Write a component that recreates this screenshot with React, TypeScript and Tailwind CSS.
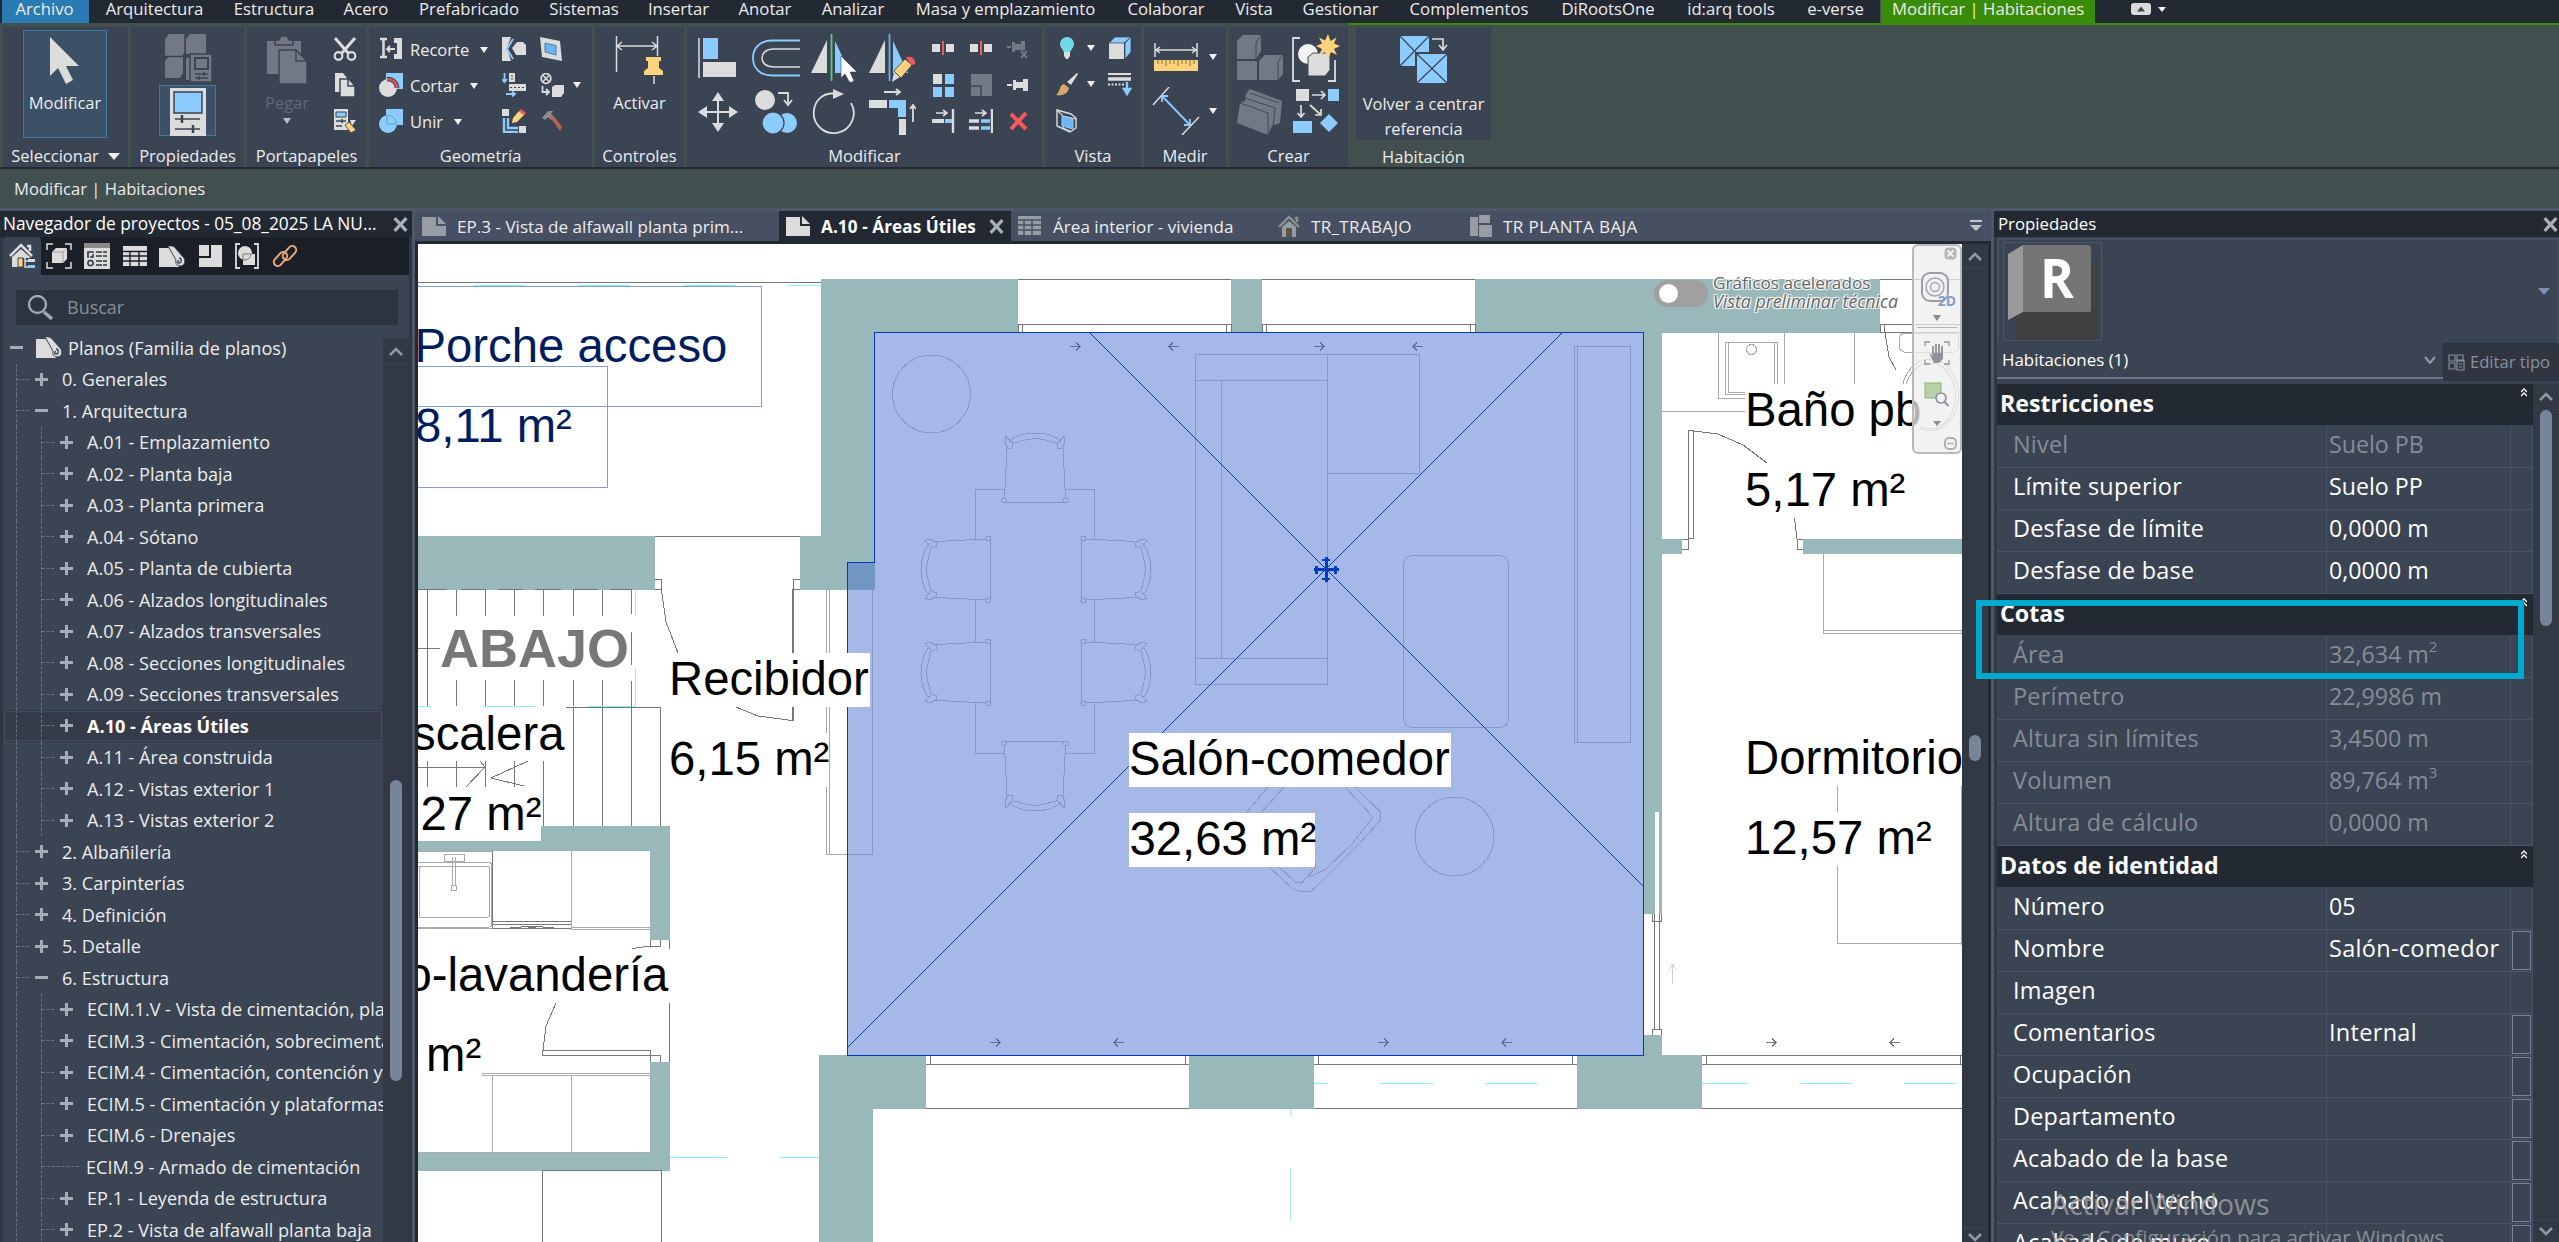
import React from 'react';

type Kids = { children?: React.ReactNode };

const L = '#dcdcdc';
const B = '#8ccbfd';
const G = '#727985';
const Y = '#fdd27c';
const D = '#3b4453';

/* ---------- shared bits ---------- */

function Ic({ s = 24, h, children }: Kids & { s?: number; h?: number }) {
  return (
    <svg width={s} height={h ?? s} viewBox={`0 0 ${s} ${h ?? s}`} fill="none" className="block shrink-0">
      {children}
    </svg>
  );
}

function Tri({ big }: { big?: boolean }) {
  return big ? (
    <Ic s={12} h={7}><path d="M0 0h12L6 7z" fill="#f0f0f0" /></Ic>
  ) : (
    <Ic s={8} h={6}><path d="M0 0h8L4 6z" fill="#f0f0f0" /></Ic>
  );
}

function Cross({ s = 14 }: { s?: number }) {
  return (
    <svg width={s} height={s} viewBox="0 0 14 14" className="block shrink-0">
      <path d="M1.5 1l11 12M12.5 1l-11 12" stroke="#a9afb9" strokeWidth="3" />
    </svg>
  );
}

function Chevron({ down }: { down?: boolean }) {
  return (
    <svg width="14" height="9" viewBox="0 0 14 9" fill="none" className="block shrink-0">
      <path d={down ? 'M1 1l6 6 6-6' : 'M1 8l6-6 6 6'} stroke="#8f98a5" strokeWidth="2.6" />
    </svg>
  );
}

/* ---------- menu bar ---------- */

const MENU: [string, string][] = [
  ['Arquitectura', 'w-[131px]'],
  ['Estructura', 'w-[108px]'],
  ['Acero', 'w-[76px]'],
  ['Prefabricado', 'w-[130px]'],
  ['Sistemas', 'w-[100px]'],
  ['Insertar', 'w-[89px]'],
  ['Anotar', 'w-[84px]'],
  ['Analizar', 'w-[92px]'],
  ['Masa y emplazamiento', 'w-[213px]'],
  ['Colaborar', 'w-[108px]'],
  ['Vista', 'w-[68px]'],
  ['Gestionar', 'w-[105px]'],
  ['Complementos', 'w-[152px]'],
  ['DiRootsOne', 'w-[126px]'],
  ['id:arq tools', 'w-[120px]'],
  ['e-verse', 'w-[89px]'],
];

function MenuBar() {
  return (
    <div className="flex h-[23px] shrink-0 bg-[#222933] text-[16.7px] leading-[18px] whitespace-nowrap text-[#ececec]">
      <div className="ml-[2px] w-[87px] bg-[#2a7ab3] pr-[2px] text-center">Archivo</div>
      {MENU.map(([t, w]) => (
        <div key={t} className={`${w} text-center`}>{t}</div>
      ))}
      <div className="w-[215px] border-l border-[#4b5560] bg-[#398c07] text-center">Modificar | Habitaciones</div>
      <div className="flex h-[18px] items-center gap-[7px] pl-[36px]">
        <Ic s={20} h={12}>
          <rect width="20" height="12" rx="3" fill="#dcdcdc" />
          <path d="M6 8.500h8L10 3.500z" fill="#3b4453" />
        </Ic>
        <Ic s={8} h={5}><path d="M0 0h8L4 5z" fill="#f0f0f0" /></Ic>
      </div>
    </div>
  );
}

/* ---------- ribbon ---------- */

function Panel({ w, label, arrow, children }: Kids & { w: string; label: string; arrow?: boolean }) {
  return (
    <div className={`${w} flex shrink-0 flex-col bg-[#3b4453]`}>
      <div className="flex h-[115px] items-start">{children}</div>
      <div className="flex h-[25px] items-center justify-center gap-[9px] pt-[3px]">
        {label}
        {arrow && <Tri big />}
      </div>
    </div>
  );
}

function Slot({ c, children }: Kids & { c: string }) {
  return <div className={`${c} flex shrink-0 items-center justify-center`}>{children}</div>;
}

function Cubes() {
  return (
    <g fill={G}>
      <path d="M2 5l4-5h16v18l-4 5H2zM23 5l4-5h16v20H23zM2 27l4-5h14v17l-3 5H2z" />
      <path d="M23 24h6v22h-6z" />
      <path d="M22 0v44M0 22.500h44" stroke={D} strokeWidth="1.500" />
    </g>
  );
}

const ICON = {
  cursor: (
    <Ic s={32} h={48}><path d="M1 0v39l8-8 8 16 7-4-7-14h13z" fill={L} /></Ic>
  ),
  typeProps: (
    <Ic s={50} h={48}>
      <Cubes />
      <path d="M27 20h22v28H27z" fill={G} stroke={D} strokeWidth="1.500" />
      <path d="M32 24h13v11H32z" fill={G} stroke={D} strokeWidth="2" />
      <path d="M32 40h13M32 44h13M41 38v4M36 42v4" stroke={D} strokeWidth="1.500" />
    </Ic>
  ),
  props: (
    <Ic s={36} h={48}>
      <path d="M0 0h36v48H0z" fill={L} />
      <path d="M4 4h28v21H4z" fill={B} stroke="#3b4453" strokeWidth="1.500" />
      <path d="M5 31h25M5 41h25" stroke="#3b4453" strokeWidth="1.500" />
      <path d="M12 27v8M23 37v8" stroke="#3b4453" strokeWidth="2.500" />
    </Ic>
  ),
  paste: (
    <Ic s={40} h={48}>
      <path d="M0 5h34v33H0z" fill={G} />
      <path d="M8 4h4l2-4h6l2 4h4v5H8z" fill={G} stroke={D} strokeWidth="1.500" />
      <path d="M12 14h17l11 11v23H12z" fill={G} stroke={D} strokeWidth="1.500" />
      <path d="M29 14v11h11" stroke={D} strokeWidth="1.500" />
    </Ic>
  ),
  cut: (
    <Ic>
      <path d="M2 1l14 16M22 1L8 17" stroke={L} strokeWidth="3" />
      <circle cx="5.500" cy="19" r="3.800" stroke={L} strokeWidth="2.200" />
      <circle cx="18.500" cy="19" r="3.800" stroke={L} strokeWidth="2.200" />
    </Ic>
  ),
  copyClip: (
    <Ic>
      <path d="M2 0h8l4 5v14H2z" fill={L} />
      <path d="M7 6h9l6 7v11H7z" fill={L} stroke={D} strokeWidth="1.500" />
      <path d="M15 6v7h7" stroke={D} strokeWidth="1.500" />
    </Ic>
  ),
  match: (
    <Ic>
      <path d="M1 0h14v21H1z" fill={L} />
      <path d="M3 3h10v5H3z" fill={B} stroke={D} />
      <path d="M3 12h10M3 17h6M9 10v4" stroke={D} strokeWidth="1.500" />
      <path d="M13 14l4 4-2 2zM17 11l6 0-4 6z" fill={L} />
      <path d="M12 16l4-3 7 8-5 3z" fill={Y} stroke={D} strokeWidth="0.800" />
    </Ic>
  ),
  cope: (
    <Ic>
      <path d="M1 2h7M4.500 2v18M1 20h7" stroke={L} strokeWidth="2.500" />
      <path d="M15 1h8v21h-8v-5h3V6h-3z" fill={L} />
      <path d="M8 12h8M11 9l-3 3 3 3" stroke={L} strokeWidth="1.800" />
    </Ic>
  ),
  cutGeo: (
    <Ic>
      <path d="M7 0h17v16H7z" fill={B} />
      <circle cx="9" cy="15" r="9" fill={L} />
      <path d="M8 6c6 0 10 4 10 9" stroke={D} strokeWidth="4.500" />
      <path d="M8 6c6 0 10 4 10 9" stroke="#e05555" strokeWidth="2.500" />
    </Ic>
  ),
  joinGeo: (
    <Ic>
      <path d="M7 0h17v16H7z" fill={B} />
      <circle cx="9" cy="15" r="9" fill={B} />
      <path d="M8 6v9h9.500A9.500 9.500 0 008 6z" stroke="#5fa0d8" />
    </Ic>
  ),
  joinWall: (
    <Ic>
      <path d="M0 0h9l-4 11 4 13H0z" fill={L} />
      <path d="M15 5h6l3 3v10H14l-4-7z" fill={L} />
      <path d="M11 2L5 12l6 10" stroke={B} strokeWidth="2" />
    </Ic>
  ),
  face: (
    <Ic>
      <path d="M0 0l20 4 2 20-20-4z" fill={L} />
      <path d="M5 6l11 2.500V18L5 15z" fill="#6db4f2" stroke="#4a7ba5" />
    </Ic>
  ),
  wallOpen: (
    <Ic>
      <path d="M2.500 0v9M0 6l2.500 3L5 6M4 21h9M10 18.500l3 2.500-3 2.500" stroke={B} strokeWidth="1.800" />
      <path d="M7 0h6v9H7z" fill={L} />
      <path d="M9 3h2M9 6h2" stroke={D} />
      <path d="M7 11h17v7H7z" fill={L} />
      <path d="M8 14.500h15" stroke={D} strokeDasharray="2 2" />
    </Ic>
  ),
  demolish2: (
    <Ic>
      <circle cx="6" cy="5.500" r="4.800" stroke={L} strokeWidth="1.800" />
      <path d="M3 2.500l6 6M9 2.500l-6 6" stroke={L} strokeWidth="1.500" />
      <path d="M2.500 13v6h6M6 16l3 3-3 3" stroke={L} strokeWidth="1.800" />
      <path d="M12 14l3-2h9v8l-3 4h-9z" fill={L} />
    </Ic>
  ),
  beamJoin: (
    <Ic>
      <path d="M0 0h7v7H0zM17 17h7v7h-7z" fill={L} />
      <path d="M2 9v14h14M6 9v10h10" stroke={B} strokeWidth="2.400" />
      <path d="M10 14l1-5 6-7 5 4-7 7z" fill={Y} />
      <path d="M17 2l2-2 5 4-2 2.500z" fill="#f25a5a" />
    </Ic>
  ),
  hammer: (
    <Ic>
      <path d="M2 9L8 2l5 0-2 3 3 3-3 3-3-3-3 3z" fill="#8e8e8e" />
      <path d="M10 8l3-2 9 12-2 4z" fill="#b5654f" />
    </Ic>
  ),
  activate: (
    <Ic s={50} h={48}>
      <path d="M1.500 0v36M42.500 0v20M2 10h40M7 6l-5 4 5 4M37 6l5 4-5 4" stroke={L} strokeWidth="1.500" />
      <path d="M31 21h15v4h-2v7l4 3v4H29v-4l4-3v-7h-2z" fill={Y} />
      <path d="M39 40v8" stroke={L} strokeWidth="1.500" />
    </Ic>
  ),
  align: (
    <Ic s={40}>
      <path d="M1 0v40" stroke={L} strokeWidth="1.500" />
      <path d="M5 0h15v21H5z" fill={B} />
      <path d="M5 24h33v15H5z" fill={L} />
    </Ic>
  ),
  offset: (
    <Ic s={48} h={40}>
      <path d="M48 2.500H20C8 2.500 1 10 1 20s7 17.500 19 17.500h28" stroke={B} strokeWidth="1.800" />
      <path d="M48 11H22c-8 0-12 4-12 9s4 9 12 9h26" stroke={L} strokeWidth="1.500" />
    </Ic>
  ),
  mirrorPick: (
    <Ic s={48}>
      <path d="M1 39L17 6v33z" fill={L} />
      <path d="M25 7l15 32H25z" fill={B} />
      <path d="M21.500 0v47" stroke="#4fd07a" strokeWidth="1.800" />
      <path d="M31 22v22l4-4 5 9 4-2-4-9h7z" fill="#fff" stroke={D} strokeWidth="0.600" />
    </Ic>
  ),
  mirrorDraw: (
    <Ic s={48}>
      <path d="M1 39L17 6v33z" fill={L} />
      <path d="M25 7l15 32H25z" fill={B} />
      <path d="M21.500 0v47" stroke="#5fb0f0" strokeWidth="1.800" />
      <path d="M24 48l2-10 6 5z" fill={L} />
      <path d="M26 37l11-12 7 6-11 13z" fill={Y} stroke={D} strokeWidth="0.800" />
      <path d="M38 24c2-3 10-1 9 6l-3 1z" fill="#f25a5a" />
    </Ic>
  ),
  move: (
    <Ic s={40}>
      <path d="M20 6v28M6 20h28" stroke={L} strokeWidth="2" />
      <path d="M20 0l6 9H14zM20 40l6-9H14zM0 20l9-6v12zM40 20l-9-6v12z" fill={L} />
    </Ic>
  ),
  copy: (
    <Ic s={46}>
      <circle cx="12" cy="11" r="10" fill={L} />
      <path d="M25 4h10v10M31 11l4 5 4-5" stroke={L} strokeWidth="1.800" />
      <circle cx="34" cy="34" r="10" fill={B} />
      <circle cx="20" cy="34" r="11" fill={B} stroke={D} strokeWidth="1.200" />
    </Ic>
  ),
  rotate: (
    <Ic s={46}>
      <path d="M40 14A20 20 0 113 21C4 12 11 5 20 4.500h6" stroke={L} strokeWidth="1.800" />
      <path d="M22 0l11 5-11 5z" fill={L} />
    </Ic>
  ),
  trim: (
    <Ic s={48}>
      <path d="M1 12h18v8H1z" fill={L} />
      <path d="M21 12h17v17h-8v-9h-9z" fill={B} />
      <path d="M31 31h7v16h-7z" fill={L} />
      <path d="M16 4h16M28 1l4 3-4 3M45 34V17M42 21l3-4 3 4" stroke={L} strokeWidth="1.800" />
    </Ic>
  ),
  split: (
    <Ic>
      <path d="M1 8h8v8H1zM15 8h8v8h-8z" fill={L} />
      <path d="M12 5v14" stroke="#f25a5a" strokeWidth="2" />
    </Ic>
  ),
  unpin: (
    <Ic>
      <path d="M0 11h4" stroke={G} strokeWidth="2" />
      <path d="M5 6h3v2h6V5h4v12h-4v-3H8v2H5z" fill={G} />
      <path d="M14 15l6 7M20 15l-6 7" stroke={D} strokeWidth="4.500" />
      <path d="M14 15l6 7M20 15l-6 7" stroke={G} strokeWidth="2" />
    </Ic>
  ),
  array: (
    <Ic>
      <path d="M2 1h9v10H2z" fill={L} />
      <path d="M14 1h9v10h-9zM2 14h9v10H2zM14 14h9v10h-9z" fill={B} />
    </Ic>
  ),
  scale: (
    <Ic>
      <path d="M2 1h21v22H2z" fill={G} />
      <path d="M2 13h10v10M12 23V13" stroke={D} strokeWidth="1.500" />
    </Ic>
  ),
  pin: (
    <Ic>
      <path d="M0 12h5" stroke={L} strokeWidth="2" />
      <path d="M6 7h3v2h7V6h5v12h-5v-3H9v2H6z" fill={L} />
    </Ic>
  ),
  trimOne: (
    <Ic>
      <path d="M22 0v24" stroke={L} strokeWidth="2.400" />
      <path d="M1 12h12" stroke={L} strokeWidth="4" />
      <path d="M14 12h7" stroke={B} strokeWidth="4" />
      <path d="M5 4h10M12 1l4 3-4 3" stroke={L} strokeWidth="1.600" />
    </Ic>
  ),
  trimMulti: (
    <Ic>
      <path d="M23 0v24" stroke={L} strokeWidth="2.400" />
      <path d="M0 12h10M0 19h10" stroke={L} strokeWidth="3.500" />
      <path d="M12 12h9M12 19h9" stroke={B} strokeWidth="3.500" />
      <path d="M6 4h10M13 1l4 3-4 3" stroke={L} strokeWidth="1.600" />
    </Ic>
  ),
  del: (
    <Ic>
      <path d="M4 5l15 15M19 4L4 20" stroke="#f9585c" strokeWidth="4" />
    </Ic>
  ),
  bulb: (
    <Ic>
      <path d="M12 1a7 7 0 017 7c0 4-4 6-4 9H9c0-3-4-5-4-9a7 7 0 017-7z" fill="#70dbe6" />
      <path d="M9 16h6v4l-2 3h-2l-2-3z" fill={L} />
    </Ic>
  ),
  boxHide: (
    <Ic>
      <path d="M1 7h15v16H1z" fill={L} />
      <path d="M1 7l6-6h16l-7 6zM17 7l6-6v15l-6 7z" fill={B} stroke={D} strokeWidth="0.700" />
    </Ic>
  ),
  brush: (
    <Ic>
      <path d="M12 10L22 1l1 1-7 11z" fill={L} />
      <path d="M1 23c4-2 3-10 8-11l5 4c-1 6-7 8-13 7z" fill="#d9a76c" />
    </Ic>
  ),
  lines: (
    <Ic>
      <path d="M0 2h23" stroke={L} strokeWidth="2" />
      <path d="M0 7h23" stroke={L} strokeWidth="3.500" />
      <path d="M0 12.500h17" stroke={L} strokeWidth="2" strokeDasharray="2 1.500" />
      <path d="M19 10v9M16 17l3 5 3-5z" stroke={B} fill={B} strokeWidth="2.400" />
    </Ic>
  ),
  selBox: (
    <Ic>
      <path d="M2 1l14 4 5 4v10l-6 4L2 17z" stroke={L} strokeWidth="1.400" />
      <path d="M2 1l6 6 13 3M8 7v12l7 3" stroke={L} strokeWidth="1.200" />
      <path d="M7 7l11 3v10L7 17z" fill="#6db4f2" stroke={B} />
    </Ic>
  ),
  measure: (
    <Ic s={44} h={28}>
      <path d="M1 0v14M43 0v14M1 7h42M6 4L2 7l4 3M38 4l4 3-4 3" stroke={L} strokeWidth="1.500" />
      <path d="M0 17h44v11H0z" fill={Y} />
      <path d="M4 17v4M8 17v4M12 17v6M16 17v4M20 17v4M24 17v6M28 17v4M32 17v4M36 17v6M40 17v4" stroke="#8a6a2a" />
    </Ic>
  ),
  dim: (
    <Ic s={48}>
      <path d="M1 18L17 0M30 48L47 30" stroke={L} strokeWidth="1.500" />
      <path d="M10 9l28 29M10 15V9h6M38 32v6h-6" stroke={B} strokeWidth="1.800" />
    </Ic>
  ),
  cubes3: (
    <Ic s={46}>
      <path d="M0 6l6-6h18v16l-5 8H0zM0 26h20v19H0zM22 26l6-6h18v19l-5 6H22z" fill={G} />
      <path d="M19 24V8l5-8M41 45V27l5-7M0 25h20M21 25v20" stroke={D} strokeWidth="0.900" />
    </Ic>
  ),
  group: (
    <Ic s={48}>
      <path d="M8 4H1v43h7M36 47h7V26" stroke={L} strokeWidth="1.800" />
      <circle cx="16" cy="20" r="10" fill="#f4f4f4" />
      <path d="M16 23l5-4h17v17l-5 6H16z" fill={L} stroke={D} />
      <path d="M36 0l2.500 7 6-3.500-2.500 6 6 2.500-6 3 3 6-6-3-3 7-3-7-6 3 3-6-6-3 6-2.500-3-6 6 3z" fill={Y} />
    </Ic>
  ),
  stack: (
    <Ic s={46}>
      <path d="M13 0l32 12-2 22-8 3-4 9L0 34 3 14l5-2 1-7z" fill={G} />
      <path d="M3 14l28 10v22M8 9l30 10-2 20M13 4l29 10" stroke={D} strokeWidth="0.900" />
    </Ic>
  ),
  assembly: (
    <Ic s={48}>
      <path d="M4 1h13v12H4z" fill={L} />
      <path d="M36 1h11v12H36zM1 33h19v12H1zM37 26l9 9-9 9-9-9z" fill={B} />
      <path d="M20 7h13M29 3l4 4-4 4M9 17v12M5.500 25L9 29l3.500-4M18 17l11 10M29 21v6h-6" stroke={L} strokeWidth="1.700" />
    </Ic>
  ),
  recenter: (
    <Ic s={50}>
      <path d="M1 0h29v30H1z" fill={B} />
      <path d="M1 0l29 30M30 0L1 30" stroke={D} strokeWidth="1.200" />
      <path d="M17 17h32v31H17z" fill={B} stroke={D} strokeWidth="2" />
      <path d="M18 18l30 29M48 18L18 47" stroke={D} strokeWidth="1.200" />
      <path d="M33 3h11v10M40 9l4 5 4-5" stroke={L} strokeWidth="1.700" />
    </Ic>
  ),
};

const GEO: [React.ReactNode, string, React.ReactNode, React.ReactNode, boolean][] = [
  [ICON.cope, 'Recorte', ICON.joinWall, ICON.face, false],
  [ICON.cutGeo, 'Cortar', ICON.wallOpen, ICON.demolish2, true],
  [ICON.joinGeo, 'Unir', ICON.beamJoin, ICON.hammer, false],
];

function Ribbon() {
  return (
    <div className="flex h-[146px] shrink-0 border-b-2 border-[#222933] bg-[#424f4f] pl-[3px] text-[16.5px] leading-[20px] whitespace-nowrap text-[#ececec]">
      <div className="flex gap-[3px] pt-[4px] pb-0">
        <Panel w="w-[125px]" label="Seleccionar" arrow>
          <div className="mt-[3px] ml-[20px] flex h-[108px] w-[84px] flex-col items-center gap-[8px] border border-[#3a7ba1] bg-[#3c5166] pt-[6px]">
            <div className="-ml-[1px]">{ICON.cursor}</div>
            <span>Modificar</span>
          </div>
        </Panel>
        <Panel w="w-[113px]" label="Propiedades">
          <div className="flex w-full flex-col items-center pt-[7px]">
            {ICON.typeProps}
            <div className="mt-[3px] flex h-[51px] w-[57px] justify-center border border-[#3a7ba1] bg-[#3c5166] pt-[2px]">
              {ICON.props}
            </div>
          </div>
        </Panel>
        <Panel w="w-[119px]" label="Portapapeles">
          <div className="flex w-[80px] flex-col items-center pt-[9px] text-[#606977]">
            {ICON.paste}
            <span className="mt-[9px]">Pegar</span>
            <div className="mt-[5px] opacity-70"><Tri /></div>
          </div>
          <div className="flex flex-col gap-[12px] pt-[10px] pl-[6px]">
            {ICON.cut}
            {ICON.copyClip}
            {ICON.match}
          </div>
        </Panel>
        <Panel w="w-[223px]" label="Geometría">
          <div className="flex flex-col pt-[4px] pl-[10px]">
            {GEO.map(([a, t, b, c, arrow]) => (
              <div key={t} className="flex h-[36px] items-center">
                {a}
                <div className="ml-[7px] flex w-[92px] items-center gap-[11px] pt-px">
                  {t}
                  <Tri />
                </div>
                {b}
                <div className="w-[14px]" />
                {c}
                <div className="pl-[9px]">{arrow && <Tri />}</div>
              </div>
            ))}
          </div>
        </Panel>
        <Panel w="w-[89px]" label="Controles">
          <div className="flex w-full flex-col items-center pt-[9px]">
            {ICON.activate}
            <span className="mt-[9px]">Activar</span>
          </div>
        </Panel>
        <Panel w="w-[355px]" label="Modificar">
          <div className="grid grid-cols-4 pt-[4px] pl-[2px]">
            {[ICON.align, ICON.offset, ICON.mirrorPick, ICON.mirrorDraw, ICON.move, ICON.copy, ICON.rotate, ICON.trim].map((i, n) => (
              <Slot key={n} c="h-[54px] w-[58px]">{i}</Slot>
            ))}
          </div>
          <div className="grid grid-cols-3 pt-[3px] pl-[3px]">
            {[ICON.split, ICON.split, ICON.unpin, ICON.array, ICON.scale, ICON.pin, ICON.trimOne, ICON.trimMulti, ICON.del].map((i, n) => (
              <Slot key={n} c="h-[36.5px] w-[38px]">{i}</Slot>
            ))}
          </div>
        </Panel>
        <Panel w="w-[96px]" label="Vista">
          <div className="flex flex-col pt-[3px] pl-[10px]">
            <div className="flex h-[36px] items-center">
              {ICON.bulb}
              <div className="w-[29px] pl-[8px]"><Tri /></div>
              {ICON.boxHide}
            </div>
            <div className="flex h-[36px] items-center">
              {ICON.brush}
              <div className="w-[29px] pl-[8px]"><Tri /></div>
              {ICON.lines}
            </div>
            <div className="flex h-[37px] items-center">{ICON.selBox}</div>
          </div>
        </Panel>
        <Panel w="w-[82px]" label="Medir">
          <div className="flex flex-col pl-[8px]">
            <div className="flex h-[59px] items-center gap-[11px] pl-[2px]">
              {ICON.measure}
              <Tri />
            </div>
            <div className="flex h-[50px] items-center gap-[9px]">
              {ICON.dim}
              <Tri />
            </div>
          </div>
        </Panel>
        <Panel w="w-[119px]" label="Crear">
          <div className="grid grid-cols-2 pt-[4px] pl-[3px]">
            {[ICON.cubes3, ICON.group, ICON.stack, ICON.assembly].map((i, n) => (
              <Slot key={n} c="h-[54px] w-[56px]">{i}</Slot>
            ))}
          </div>
        </Panel>
      </div>
      <div className="ml-[8px] flex w-[135px] flex-col pt-[4px]">
        <div className="flex h-[113px] flex-col items-center bg-[#3b4453] pt-[9px]">
          {ICON.recenter}
          <span className="mt-[5px] text-center leading-[25px]">
            Volver a centrar
            <br />
            referencia
          </span>
        </div>
        <div className="flex h-[27px] items-center justify-center pt-[6px]">Habitación</div>
      </div>
    </div>
  );
}

/* ---------- project browser ---------- */

function SheetIcon({ s = 26 }: { s?: number }) {
  return (
    <svg width={s} height={(s * 21) / 26} viewBox="0 0 26 21" fill="none" className="block shrink-0">
      <path d="M0 2h10l10 10v9H0z" fill={L} />
      <path d="M9 0c4-1 7 1 8 3l8 9c2 4 0 8-4 8-3 0-5-3-4-6z" fill={L} stroke={D} />
      <path d="M20 12c3 0 3 5 0 5-2 0-2-2 0-2.500" stroke={D} strokeWidth="1.300" />
    </svg>
  );
}

const NAV_ICONS = [
  <Ic key="home" s={26}>
    <path d="M1 13L12 2l11 11M18 3h3v5" stroke={L} strokeWidth="2.500" />
    <path d="M3 14l9-8 9 8v10H3z" fill={L} />
    <path d="M9 15h5v9H9z" fill={Y} stroke={D} />
    <path d="M14 15h12v11H14z" fill={D} />
    <path d="M16 15v9h3M16 18h3" stroke={L} strokeWidth="1.500" />
    <path d="M19 16h7v3h-7z" fill={L} />
    <path d="M19 22h7v3h-7z" fill={B} />
  </Ic>,
  <Ic key="view" s={26}>
    <path d="M1 7V1h6M19 1h6v6M25 19v6h-6M7 25H1v-6" stroke={L} strokeWidth="1.500" />
    <path d="M6 9l4-4h11v11l-4 4H6z" fill={L} />
    <path d="M6 9h11v11M17 9l4-4" stroke="#8b8b8b" strokeWidth="0.700" />
  </Ic>,
  <Ic key="legend" s={26}>
    <path d="M0 0h26v26H0z" fill={L} />
    <path d="M0 0h26v5H0z" fill="#8b8b8b" />
    <path d="M4 9h5v5H4zM12 9h11M12 13h11M12 18h11M12 22h11" stroke="#33383f" strokeWidth="1.600" strokeDasharray="6 1" />
    <circle cx="6.500" cy="20" r="2.600" stroke="#33383f" strokeWidth="1.500" />
  </Ic>,
  <Ic key="table" s={26}>
    <path d="M1 3h24v20H1z" fill={L} />
    <path d="M1 8.500h24M1 13h24M1 18h24M8 8v15M17 8v15" stroke="#1b2028" strokeWidth="1.400" />
  </Ic>,
  <SheetIcon key="sheet" />,
  <Ic key="family" s={26}>
    <path d="M2 2h10v11H2zM14 2h11v22H2v-9h12z" fill={L} />
  </Ic>,
  <Ic key="group" s={26}>
    <path d="M6 1H2v24h4M20 1h4v24h-4" stroke={L} strokeWidth="1.800" />
    <circle cx="11" cy="10" r="7" fill={L} />
    <path d="M9 11h12v11H9z" fill={L} />
    <path d="M9 11h8a7 7 0 01-6 6H9z" stroke="#777" />
  </Ic>,
  <Ic key="link" s={26}>
    <g stroke="#eba87a" strokeWidth="2">
      <rect x="9.500" y="6" width="16" height="8" rx="4" transform="rotate(-48 17.500 10)" />
      <rect x="0.500" y="12" width="16" height="8" rx="4" transform="rotate(-48 8.500 16)" />
    </g>
  </Ic>,
];

type Row = { t: string; lvl: 1 | 2; k: '+' | '-' | ''; sel?: boolean };
const r2 = (t: string): Row => ({ t, lvl: 2, k: '+' });
const r1 = (t: string, k: '+' | '-' = '+'): Row => ({ t, lvl: 1, k });

const TREE: Row[] = [
  r1('0. Generales'),
  r1('1. Arquitectura', '-'),
  r2('A.01 - Emplazamiento'),
  r2('A.02 - Planta baja'),
  r2('A.03 - Planta primera'),
  r2('A.04 - Sótano'),
  r2('A.05 - Planta de cubierta'),
  r2('A.06 - Alzados longitudinales'),
  r2('A.07 - Alzados transversales'),
  r2('A.08 - Secciones longitudinales'),
  r2('A.09 - Secciones transversales'),
  { t: 'A.10 - Áreas Útiles', lvl: 2, k: '+', sel: true },
  r2('A.11 - Área construida'),
  r2('A.12 - Vistas exterior 1'),
  r2('A.13 - Vistas exterior 2'),
  r1('2. Albañilería'),
  r1('3. Carpinterías'),
  r1('4. Definición'),
  r1('5. Detalle'),
  r1('6. Estructura', '-'),
  r2('ECIM.1.V - Vista de cimentación, planta'),
  r2('ECIM.3 - Cimentación, sobrecimentación'),
  r2('ECIM.4 - Cimentación, contención y muros'),
  r2('ECIM.5 - Cimentación y plataformas'),
  r2('ECIM.6 - Drenajes'),
  { t: 'ECIM.9 - Armado de cimentación', lvl: 2, k: '' },
  r2('EP.1 - Leyenda de estructura'),
  r2('EP.2 - Vista de alfawall planta baja'),
];

function Knob({ k }: { k: string }) {
  return (
    <Ic s={13}>
      <path d="M0 6.500h13" stroke="#a7adb7" strokeWidth="3" />
      {k === '+' && <path d="M6.500 0v13" stroke="#a7adb7" strokeWidth="3" />}
    </Ic>
  );
}

function TreeRow({ row }: { row: Row }) {
  const two = row.lvl === 2;
  return (
    <div className="flex h-[31.5px] items-center pl-[13px]">
      <div className={`h-full shrink-0 border-l border-dashed border-[#6a7280] ${two ? 'w-[25px]' : 'hidden'}`} />
      <div className="flex h-full shrink-0 items-center border-l border-dashed border-[#6a7280]">
        <div className={`shrink-0 border-t border-dashed border-[#6a7280] ${row.k ? 'mr-[6px] w-[12px]' : 'mr-[7px] w-[37px]'}`} />
        {row.k && <Knob k={row.k} />}
      </div>
      <div
        className={`flex h-[29px] shrink-0 items-center whitespace-nowrap ${two ? (row.k ? 'pl-[14px]' : 'pl-0') : 'pl-[14px]'} ${row.sel ? 'font-bold text-white' : ''}`}
      >
        {row.t}
      </div>
    </div>
  );
}

function Browser() {
  return (
    <div className="flex w-[412px] shrink-0 flex-col bg-[#2f3743]">
      <div className="flex h-[26px] shrink-0 items-center justify-between bg-[#222933] pr-[4px] pl-[3px] text-[17.3px] text-white">
        <span className="whitespace-nowrap">Navegador de proyectos - 05_08_2025 LA NU...</span>
        <Cross s={15} />
      </div>
      <div className="mr-[3px] ml-[3px] flex min-h-0 flex-1 flex-col bg-[#3b4453]">
        <div className="flex h-[38px] shrink-0 bg-[#1b2028]">
          {NAV_ICONS.map((i, n) => (
            <div key={n} className={`flex w-[37.6px] items-center justify-center ${n === 0 ? 'rounded-t bg-[#3b4453]' : ''}`}>
              {i}
            </div>
          ))}
        </div>
        <div className="mt-[15px] mr-[11px] ml-[13px] flex h-[35px] shrink-0 items-center gap-[14px] bg-[#2d343f] pl-[11px] text-[18px] text-[#888e97]">
          <Ic s={26}>
            <circle cx="10.500" cy="9.500" r="8.500" stroke="#a3a8b0" strokeWidth="2.400" />
            <path d="M17 17l8 7" stroke="#a3a8b0" strokeWidth="3.500" />
          </Ic>
          <span>Buscar</span>
        </div>
        <div className="flex min-h-0 flex-1">
          <div className="w-[380px] overflow-hidden pt-[7px] text-[18.1px] leading-[22px] text-[#ececec]">
            <div className="flex h-[31.5px] items-center pl-[7px]">
              <Knob k="-" />
              <div className="mr-[6px] ml-[13px]"><SheetIcon /></div>
              <span>Planos (Familia de planos)</span>
            </div>
            {TREE.map((r) =>
              r.sel ? (
                <div key={r.t} className="bg-[#353b48] outline-1 -outline-offset-2 outline-[#434d5c]">
                  <TreeRow row={r} />
                </div>
              ) : (
                <TreeRow key={r.t} row={r} />
              ),
            )}
          </div>
          <div className="mt-[13px] flex w-[26px] flex-col items-center bg-[#323945]">
            <div className="flex h-[27px] w-full shrink-0 items-center justify-center border-b border-[#3b4453]">
              <Chevron />
            </div>
            <div className="mt-[415px] h-[301px] w-[12px] rounded-full bg-[#788598]" />
          </div>
        </div>
      </div>
    </div>
  );
}

/* ---------- document tabs ---------- */

function PageIcon({ dim }: { dim?: boolean }) {
  return (
    <Ic s={24} h={20}>
      <path d="M0 1h14v9h10v10H0zM16 0l8 8h-8z" fill={dim ? '#989ca4' : L} />
    </Ic>
  );
}

function DocTabs() {
  return (
    <div className="flex h-[30px] shrink-0 items-center bg-[#475063] text-[17.1px] whitespace-nowrap text-[#ececec]">
      <div className="flex w-[364px] items-center gap-[11px] pl-[7px]">
        <PageIcon dim />
        <span className="pt-[2px]">EP.3 - Vista de alfawall planta prim...</span>
      </div>
      <div className="flex h-full w-[232px] items-center bg-[#222933] pl-[7px] font-bold text-white">
        <PageIcon />
        <span className="w-[168px] pt-[2px] pl-[11px] tracking-[0.1px]">A.10 - Áreas Útiles</span>
        <div className="ml-[11px]"><Cross s={15} /></div>
      </div>
      <div className="flex w-[267px] items-center gap-[12px] pl-[7px]">
        <Ic s={23} h={19}>
          <path d="M0 0h23v19H0z" fill="#989ca4" />
          <path d="M0 4h23M0 9h23M0 14h23M6 4v15M14 4v15" stroke="#475063" strokeWidth="1.400" />
        </Ic>
        <span className="pt-[2px]">Área interior - vivienda</span>
      </div>
      <div className="flex w-[192px] items-center gap-[11px]">
        <Ic s={22}>
          <path d="M1 12L11 2l10 10M17 3h2v4" stroke="#8f8f8f" strokeWidth="2.400" />
          <path d="M4 12l7-6 7 6v10H4z" fill="#989ca4" />
          <path d="M8 13h6v9H8z" fill="#5b5648" />
        </Ic>
        <span className="pt-[2px] tracking-[0.3px]">TR_TRABAJO</span>
      </div>
      <div className="flex flex-1 items-center gap-[11px]">
        <Ic s={22}>
          <path d="M0 2h8v19H0zM9 0h11v8H9zM9 10h13v12H9z" fill="#989ca4" />
        </Ic>
        <span className="pt-[2px] tracking-[0.4px]">TR PLANTA BAJA</span>
      </div>
      <div className="pr-[9px]">
        <Ic s={12} h={12}><path d="M0 1h12" stroke="#c0c4ca" strokeWidth="2" /><path d="M0 5h12l-6 6z" fill="#c0c4ca" /></Ic>
      </div>
    </div>
  );
}

/* ---------- floor plan ---------- */

const WALLS: [number, number, number, number][] = [
  [821, 279, 197, 54], [821, 279, 54, 311], [800, 536, 75, 54], [1231, 279, 31, 54],
  [1475, 279, 405, 54], [418, 536, 237, 54], [1643, 279, 19, 635], [1643, 1035, 19, 25],
  [1662, 539, 20, 15], [1803, 539, 159, 15], [541, 826, 129, 25], [418, 841, 125, 10],
  [650, 826, 20, 114], [650, 1062, 20, 109], [418, 1153, 252, 18], [819, 1055, 107, 54],
  [819, 1100, 54, 142], [1189, 1055, 125, 54], [1577, 1055, 125, 54],
];

const PLAN_TEXT: [number, number, string][] = [
  [669, 694.500, 'Recibidor'], [669, 775, '6,15 m²'], [412, 749.500, 'scalera'], [420.500, 829.500, '27 m²'],
  [405.500, 990.500, 'o-lavandería'], [426, 1071, 'm²'], [1745, 426, 'Baño pb'], [1745, 506, '5,17 m²'],
  [1745, 774, 'Dormitorio'], [1745, 854, '12,57 m²'], [1129, 775, 'Salón-comedor'], [1129.500, 854.500, '32,63 m²'],
];

const MASKS: [number, number, number, number][] = [
  [668, 653, 202, 54], [668, 733, 161, 54], [418, 707, 145, 54], [418, 787, 123, 54],
  [418, 949, 252, 54], [418, 1029, 64, 54], [1745, 384, 175, 54], [1745, 464, 162, 54],
  [1745, 732, 217, 54], [1745, 812, 202, 54], [440, 616, 191, 64], [1129, 733, 322, 54], [1129, 813, 186, 54],
];

const CHAIRS: [number, number, number][] = [
  [1035, 502.500, 0], [990.500, 569.500, -90], [990.500, 672.500, -90],
  [1081.500, 569.500, 90], [1081.500, 672.500, 90], [1035, 741.500, 180],
];

const ROOM = 'M874.5 332.500H1643.500V1055.500H847.500V562.500H874.500z';

function Chair({ x, y, a }: { x: number; y: number; a: number }) {
  return (
    <g transform={`translate(${x} ${y}) rotate(${a})`}>
      <path d="M-31 0L-28 -55H28L31 0z" fill="#a6b8e7" stroke="none" />
      <path d="M-30.500 -4L-28 -54M30.500 -4L28 -54M-31 0H31" />
      <path d="M-26 -61Q-18 -69 0 -69.500Q18 -69 26 -61M-21 -59.500L-8 -63L0 -64L8 -63L21 -59.500" />
      <path d="M-29 -66l4 4 3 3-1 5-4 0-3-6zM29 -66l-4 4-3 3 1 5 4 0 3-6z" />
      <circle cx="-31" cy="-2" r="2.500" />
      <circle cx="31" cy="-2" r="2.500" />
    </g>
  );
}

function Arrow({ x, y, left }: { x: number; y: number; left?: boolean }) {
  return <path d={left ? `M${x + 10} ${y}h-10m4 -4l-4 4 4 4` : `M${x} ${y}h10m-4 -4l4 4-4 4`} />;
}

function Plan() {
  return (
    <svg width="1544" height="998" viewBox="418 244 1544 998" fill="none" className="block" shapeRendering="crispEdges">
      <rect x="418" y="244" width="1544" height="998" fill="#fff" />
      <g fill="#98b8ba">
        {WALLS.map(([x, y, w, h], i) => <rect key={i} x={x} y={y} width={w} height={h} />)}
      </g>

      {/* porch */}
      <path d="M418 282.500H821M655 536.500H800" stroke="#777" />
      <path
        d="M418 285.500h2M473 285.500h52M578 285.500h52M683 285.500h52M787 285.500h34M635.500 590v26M635.500 668v38.500M418 706.500h13M483 706.500h53M588 706.500h47M670 1157.500h58M780 1157.500h39M1314 1083.500h14M1380 1083.500h53M1485 1083.500h52M1702 1083.500h45M1799 1083.500h53M1904 1083.500h53"
        stroke="#80f8f8"
      />
      <path d="M1290.500 1109v7M1290.500 1168v53" stroke="#a9eeee" />
      <path d="M410 286.500H761.500V406.500H410M410 366.500H607.500V487.500H410" stroke="#7f9ddb" />

      {/* window and door frames */}
      <path
        d="M1018 279.500h213M1018 324.500h213M1018.500 324v8M1022.500 324v8M1226.500 324v8M1231.500 324v8M1262 279.500h213M1262 324.500h213M1262.500 324v8M1266.500 324v8M1470.500 324v8M1475.500 324v8M1880 279.500h82M1880 324.500h82M1880 332.500h82M1880.500 324v8M1884.500 324v8M926 1064.500h263M926 1108.500h263M1185.500 1056v8M1314 1064.500h263M1314 1108.500h263M1318.500 1056v8M1572.500 1056v8M930.500 1056v8M1702 1055.500h260M1702 1064.500h260M1702 1108.500h260M1706.500 1056v8M1960.500 1056v8"
        stroke="#777"
      />
      <g stroke="#777">
        <path d="M655 579.500h6.500v10h-6.500M800 579.500h-6.500v10h6.500M661.500 590L666 622 678 653M736 707L758 716 792 720.500" />
        <path d="M793 589v132" strokeWidth="2" />
        <path d="M1688.500 430.500h5v108h-5zM1694 431L1718 434 1743 445 1767 463M1682 539.500h6.500v10h-6.500M1803 539.500h-5.500v10h5.500M1794.500 518L1797 539M1885 333L1889 357 1896 370" />
        <path d="M1652 914v7h9.500v-7M1654.500 914v116M1659.500 914v116M1652 1035v-5.500h9.500v5.500" />
        <path d="M650.500 940v6M650 946.500h10.500V940M632 948.500L650 946M669.500 940v9M669.500 1003v59M542.500 1050.500h108v5h-108zM543 1050L546 1026 556 1003M650 1055.500h10.500v6.500M650.500 1055v7" />
        <path d="M542.500 1242V1170.500h119V1242M492.500 851v77.500M492 921.500h79M492 924.500h79M492 928.500h79M500 929l32 -3 22 2M528 927h8" />
      </g>
      <rect x="1655" y="812" width="4" height="102" fill="#fff" />

      {/* stairs */}
      <g stroke="#777">
        <path d="M418 589.500h29M461 589.500h25M498 589.500h25M535 589.500h26M573 589.500h25M610 589.500h22M418 648.500h22M566 707.500h94.500V826M573.500 707v119M602.500 707v119M631.500 707v119M631.500 590v24M631.500 632v33M631.500 681v26M543.500 761v65" />
        <path d="M427.500 590v116M456.500 590v116M485.500 590v116M514.500 590v116M543.500 590v116M573.500 590v116M602.500 590v116M427.500 761v26M456.500 761v26M485.500 761v26M514.500 761v26M418 767.500h67M480 761L485 767 466 787M528 761L491 778 524 786" />
      </g>

      {/* kitchen and bathroom fittings */}
      <g stroke="#aaa">
        <path d="M418 851.500h74M418 862.500h71q2.500 0 2.500 3V925q0 2-3 2H418M418 866.500h69q2.500 0 2.500 2V915q0 2-2.500 2.500H421q-2 0-2-2V866M418 928.500h74M571.500 851v78M571 927.500h79M571 929.500h79M444.500 854.500h20v7h-20zM452.500 857v28M455.500 857v28" />
        <circle cx="454" cy="888" r="3" />
        <path d="M482 1073.500h168M482 1075.500h168M492.500 1075v77M571.500 1075v77M650.500 1075v77M418 1152.500h232" />
        <path d="M826.500 590v264M829.500 590v264M826 854.500h22" />
        <path d="M1718.500 333v65.500h27M1725.500 342.500h52v52h-52zM1728.500 342v50h46v-50M1784.500 333v51M1854.500 333v51M1662 411.500h83" />
        <circle cx="1751.500" cy="349.500" r="5" />
        <rect x="1899.500" y="333" width="59" height="19" rx="5" />
        <ellipse cx="1930" cy="395" rx="28.500" ry="36" />
        <ellipse cx="1930" cy="396" rx="25.500" ry="33" />
        <path d="M1823.500 554v79.500H1962M1823 630.500h139M1837.500 786v157.500H1961M1961.500 786v159" />
        <path d="M1672.500 984v-19M1669 969l3.500-4 3.500 4" stroke="#ccc" />
      </g>

      {/* selected room */}
      <path d={ROOM} fill="#a6b8e7" />
      <rect x="847" y="562" width="28" height="28" fill="#7196c3" />
      <g stroke="#8797c8">
        <path d="M872.500 590v264.500H848M975.500 489.500h119v264h-119z" />
        <circle cx="931.500" cy="394" r="39" />
        <circle cx="1454.500" cy="836.500" r="39.500" />
        <path d="M1195.500 354.500H1327.500V684.500H1195.500zM1195 380.500h132M1221.500 380v278M1195 658.500h132M1327.500 354.500H1419.500V473.500H1327.500" />
        <rect x="1403.500" y="555.500" width="105" height="172" rx="9" />
        <path d="M1574.500 346.500h56v396h-56zM1577.500 346v396" />
        {CHAIRS.map(([x, y, a], i) => <Chair key={i} x={x} y={y} a={a} />)}
        <path d="M1268 787L1246 813M1284 787L1261 813M1355 787L1380.500 812V820L1359 844 1325 878 1311.600 891 1303 892 1293 889 1269 867M1345 787L1373 817 1352 844 1325 870 1308 877M1279 867L1295 882 1301.500 883 1315 868V863" />
      </g>
      <g stroke="#5e6fa6">
        <Arrow x={1070} y={346.500} />
        <Arrow x={1169} y={346.500} left />
        <Arrow x={1314} y={346.500} />
        <Arrow x={1413} y={346.500} left />
        <Arrow x={990} y={1042.500} />
        <Arrow x={1114} y={1042.500} left />
        <Arrow x={1378} y={1042.500} />
        <Arrow x={1502} y={1042.500} left />
      </g>
      <g stroke="#777">
        <Arrow x={1766} y={1042.500} />
        <Arrow x={1890} y={1042.500} left />
      </g>
      <path d={ROOM} stroke="#003cbe" />
      <path d="M1090 333L1643 886M1562 333L848 1047" stroke="#003cbe" />
      <g stroke="#003cbe" strokeWidth="2.400">
        <path d="M1326 557v25M1313.500 569.500h25" strokeWidth="3" />
        <path d="M1322 560h8M1322 579h8M1316.500 565.500v8M1335.500 565.500v8" />
      </g>

      {/* labels */}
      <g fill="#fff">
        {MASKS.map(([x, y, w, h], i) => <rect key={i} x={x} y={y} width={w} height={h} />)}
      </g>
      <g fontFamily="'Liberation Sans', Arial, sans-serif" fontSize="47.300" fill="#000">
        {PLAN_TEXT.map(([x, y, t]) => <text key={t + x + y} x={x} y={y}>{t}</text>)}
        <text x="414.500" y="361.500" fill="#001d5e">Porche acceso</text>
        <text x="415" y="441.500" fill="#001d5e">8,11 m²</text>
        <text x="440" y="666.500" fill="#777" fontWeight="bold" fontSize="54">ABAJO</text>
      </g>
    </svg>
  );
}

function NavBar() {
  return (
    <div className="absolute top-0 right-0 flex h-[210px] w-[50px] flex-col items-center rounded-md border-2 border-[#b9b9b9] bg-[#eeeeee]/75">
      <div className="flex w-full justify-end pt-[1px] pr-[3px]">
        <Ic s={13}><rect x="0.500" y="0.500" width="12" height="12" rx="4" fill="#b5b5b5" /><path d="M3.500 3.500l6 6M9.500 3.500l-6 6" stroke="#f2f2f2" strokeWidth="2" /></Ic>
      </div>
      <div className="mt-[11px] pr-[5px]">
        <Ic s={32} h={34}>
          <rect x="3" y="2" width="26" height="28" rx="8" fill="#f1f1f3" stroke="#9a9da3" strokeWidth="2" />
          <circle cx="16" cy="16" r="9" stroke="#a5a8ae" strokeWidth="1.500" />
          <circle cx="16" cy="16" r="4.500" stroke="#a5a8ae" strokeWidth="1.500" />
        </Ic>
      </div>
      <div className="-mt-[12px] ml-[20px] text-[14px] leading-[16px] font-bold text-[#7f9fc6]">2D</div>
      <div className="mt-[6px]"><Ic s={8} h={6}><path d="M0 0h8L4 6z" fill="#8a8a8a" /></Ic></div>
      <div className="mt-[6px] h-px w-[40px] bg-[#b5b5b5]" />
      <div className="mt-[12px]">
        <Ic s={26}>
          <path d="M1 6V2h5M20 2h5v4M25 20v4h-5M6 24H1v-4" stroke="#8f9298" strokeWidth="1.300" />
          <path d="M9 6v9M12 4v11M15 4v11M18 6v9" stroke="#8f9298" strokeWidth="1.800" />
          <path d="M5 13l4 3V13h10v6l-4 4h-5z" fill="#8f9298" />
        </Ic>
      </div>
      <div className="mt-[16px]">
        <Ic s={26}>
          <rect x="1" y="1" width="16" height="15" fill="#b6d1a5" stroke="#8fb37c" />
          <circle cx="17" cy="16" r="5" fill="#f0f0f0" stroke="#8f9298" strokeWidth="1.700" />
          <path d="M20.500 20l4 4" stroke="#8f9298" strokeWidth="2" />
        </Ic>
      </div>
      <div className="mt-[13px]"><Ic s={8} h={5}><path d="M0 0h8L4 5z" fill="#8a8a8a" /></Ic></div>
      <div className="mt-[11px] flex w-full justify-end pr-[3px]">
        <Ic s={13}><rect x="1" y="1" width="11" height="11" rx="4" stroke="#b0b0b0" strokeWidth="2" /><path d="M3 6.500h7" stroke="#b0b0b0" strokeWidth="1.500" /></Ic>
      </div>
    </div>
  );
}

function Canvas() {
  return (
    <div className="relative h-[998px] w-[1544px] shrink-0 overflow-hidden bg-white">
      <Plan />
      <div className="absolute top-[29px] right-[54px] flex items-start gap-[5px]">
        <div className="mt-[7px] flex h-[27px] w-[54px] items-center rounded-full bg-[#a0a0a0] pl-[5px]">
          <div className="h-[19px] w-[19px] rounded-full bg-white" />
        </div>
        <div className="w-[195px] text-[17.2px] leading-[19px] whitespace-nowrap text-[#666] [text-shadow:1px_1px_1px_#fff,-1px_-1px_1px_#fff,1px_-1px_1px_#fff,-1px_1px_1px_#fff]">
          Gráficos acelerados
          <div className="text-[17.8px] italic">Vista preliminar técnica</div>
        </div>
      </div>
      <NavBar />
    </div>
  );
}

function Workspace() {
  return (
    <div className="flex w-[1576px] shrink-0 flex-col">
      <DocTabs />
      <div className="flex border-t-[3px] border-l-[3px] border-[#222933]">
        <Canvas />
        <div className="flex w-[26px] flex-col items-center bg-[#323945]">
          <div className="flex h-[25px] w-full items-center justify-center border-b border-[#3b4453]"><Chevron /></div>
          <div className="mt-[466px] h-[26px] w-[12px] rounded-full bg-[#788598]" />
          <div className="mt-[467px] flex h-[14px] w-full items-end justify-center border-t border-[#3b4453]"><Chevron down /></div>
        </div>
        <div className="w-[3px] bg-[#222933]" />
      </div>
    </div>
  );
}

/* ---------- properties ---------- */

type Prop = { n: string; v?: React.ReactNode; dim?: boolean; btn?: boolean };

const SECTIONS: { title: string; rows: Prop[] }[] = [
  {
    title: 'Restricciones',
    rows: [
      { n: 'Nivel', v: 'Suelo PB', dim: true },
      { n: 'Límite superior', v: 'Suelo PP' },
      { n: 'Desfase de límite', v: '0,0000 m' },
      { n: 'Desfase de base', v: '0,0000 m' },
    ],
  },
  {
    title: 'Cotas',
    rows: [
      { n: 'Área', v: <Unit v="32,634 m" p="2" />, dim: true },
      { n: 'Perímetro', v: '22,9986 m', dim: true },
      { n: 'Altura sin límites', v: '3,4500 m', dim: true },
      { n: 'Volumen', v: <Unit v="89,764 m" p="3" />, dim: true },
      { n: 'Altura de cálculo', v: '0,0000 m', dim: true },
    ],
  },
  {
    title: 'Datos de identidad',
    rows: [
      { n: 'Número', v: '05' },
      { n: 'Nombre', v: 'Salón-comedor', btn: true },
      { n: 'Imagen' },
      { n: 'Comentarios', v: 'Internal', btn: true },
      { n: 'Ocupación', btn: true },
      { n: 'Departamento', btn: true },
      { n: 'Acabado de la base', btn: true },
      { n: 'Acabado del techo', btn: true },
      { n: 'Acabado de muro', btn: true },
    ],
  },
];

function Unit({ v, p }: { v: string; p: string }) {
  return (
    <span className="flex">
      {v}
      <span className="-mt-[8px] text-[15px]">{p}</span>
    </span>
  );
}

function Section({ title, rows }: { title: string; rows: Prop[] }) {
  return (
    <>
      <div className="flex h-[42px] shrink-0 items-center justify-between border-b border-[#3b4453] bg-[#222933] pr-[6px] pl-[3px] font-bold text-white">
        <span className="pb-[3px]">{title}</span>
        <div className="mb-[24px]">
          <Ic s={6} h={9}><path d="M0 4l3-3 3 3M0 8l3-3 3 3" stroke="#fff" strokeWidth="1.300" /></Ic>
        </div>
      </div>
      {rows.map((r) => (
        <div key={r.n} className={`flex h-[42px] shrink-0 items-stretch border-b border-[#4a5466] ${r.dim ? 'text-[#868c96]' : 'text-white'}`}>
          <div className="flex w-[329px] items-center pb-[5px] pl-[16px] text-[23.4px] tracking-[0.25px]">{r.n}</div>
          <div className={`flex w-[184px] items-center border-l border-[#4a5466] pb-[5px] pl-[2px] ${r.btn ? 'text-[23.5px] tracking-[0.3px]' : ''}`}>{r.v}</div>
          <div className="flex-1 border-x border-[#4a5466] p-px">
            {r.btn && <div className="h-full border border-[#76839a]" />}
          </div>
        </div>
      ))}
    </>
  );
}

function RLogo() {
  return (
    <Ic s={97}>
      <rect x="12" y="18" width="82" height="79" rx="4" fill="#404040" />
      <path d="M4 11L19 2V69L4 77z" fill="#9a9a9a" />
      <path d="M19 2H84q3 0 3 4V67q0 2-3 2H19z" fill="#757575" />
      <text x="36" y="54.500" fontSize="53" fontWeight="bold" fill="#fff" fontFamily="'Open Sans'" textLength="34" lengthAdjust="spacingAndGlyphs">R</text>
    </Ic>
  );
}

function Properties() {
  return (
    <div className="relative flex min-w-0 flex-1 flex-col bg-[#3b4453] text-white">
      <div className="flex h-[26px] shrink-0 items-center justify-between bg-[#222933] pr-[1px] pl-[4px] text-[16.8px]">
        <span>Propiedades</span>
        <Cross s={15} />
      </div>
      <div className="flex min-h-0 flex-1 flex-col border-l-[3px] border-[#2f3743]">
        <div className="mt-[1px] flex h-[105px] shrink-0 items-center justify-between border-2 border-b-0 border-[#475063] pr-[7px] pl-[4px]">
          <div className="border border-[#4c576a]"><RLogo /></div>
          <Ic s={12} h={7}><path d="M0 0h12L6 7z" fill="#7f90b0" /></Ic>
        </div>
        <div className="flex h-[38px] shrink-0 text-[16.9px]">
          <div className="mb-[2px] flex w-[446px] items-center justify-between border-b-2 border-[#66758d] pr-[7px] pl-[5px]">
            Habitaciones (1)
            <Ic s={12} h={8}><path d="M1 1l5 6 5-6" stroke="#8d9cb5" strokeWidth="2" /></Ic>
          </div>
          <div className="flex flex-1 items-center gap-[5px] bg-[#2f3642] pl-[5px] text-[16.6px] text-[#8a9099]">
            <Ic s={17} h={17}>
              <path d="M1 1h6v6H1zM9 1h6v6H9zM1 9h6v6H1zM9 6h7v10H9z" stroke="#8a9099" strokeWidth="1.200" />
              <path d="M11 10h3M11 13h3" stroke="#8a9099" />
            </Ic>
            Editar tipo
          </div>
        </div>
        <div className="mt-[3px] flex min-h-0 flex-1">
          <div className="flex w-[536px] flex-col overflow-hidden text-[23.2px] leading-[30px] whitespace-nowrap">
            {SECTIONS.map((s) => <Section key={s.title} {...s} />)}
          </div>
          <div className="flex flex-1 flex-col items-center bg-[#323945]">
            <div className="flex h-[26px] w-full items-center justify-center border-b border-[#3b4453]"><Chevron /></div>
            <div className="h-[216px] w-[12px] rounded-full bg-[#788598]" />
            <div className="mt-auto flex h-[22px] w-full items-center justify-center border-t border-[#3b4453]"><Chevron down /></div>
          </div>
        </div>
      </div>
      <div className="absolute top-[389px] -left-[18px] h-[79px] w-[548px] border-[6px] border-[#00a9ce]" />
      <div className="absolute top-[975px] left-[57px] whitespace-nowrap text-[#a2a2a2]/80">
        <div className="text-[28.4px] leading-[37px]">Activar Windows</div>
        <div className="text-[20.7px] leading-[29px]">Ve a Configuración para activar Windows.</div>
      </div>
    </div>
  );
}

export default function App() {
  return (
    <div className="flex h-[1242px] w-[2559px] flex-col overflow-hidden bg-[#424f4f] font-['Open_Sans','Noto_Sans',sans-serif]">
      <MenuBar />
      <div className="flex h-0">
        <div className="h-[2px] w-[1348px]" />
        <div className="z-10 h-[2px] flex-1 bg-[#398c07]" />
      </div>
      <Ribbon />
      <div className="flex h-[39px] shrink-0 items-center pt-[2px] pl-[14px] text-[16.6px] text-[#ececec]">Modificar | Habitaciones</div>
      <div className="flex min-h-0 flex-1 border-t-[3px] border-[#4c5767] bg-[#4c5767]">
        <Browser />
        <div className="w-[3px]" />
        <Workspace />
        <div className="w-[3px]" />
        <Properties />
      </div>
    </div>
  );
}
